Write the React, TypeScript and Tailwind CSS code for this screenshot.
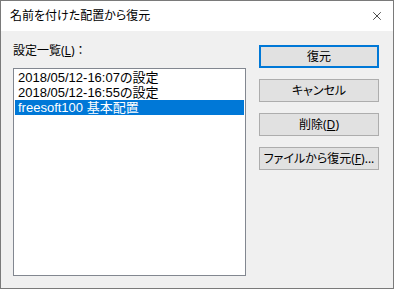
import { X } from "lucide-react";

const font = {
  fontFamily: '"Noto Sans", "Noto Sans CJK JP", sans-serif',
};

type BtnProps = { label: React.ReactNode; primary?: boolean };

const Btn = ({ label, primary }: BtnProps) => (
  <button
    className={`h-[23px] w-[120px] bg-[#e1e1e1] text-[12px] leading-none text-black whitespace-nowrap flex items-center justify-center ${
      primary ? "border-2 border-[#0078d7]" : "border border-[#adadad]"
    }`}
  >
    {label}
  </button>
);

export default function App() {
  const items = ["2018/05/12-16:07の設定", "2018/05/12-16:55の設定", "freesoft100 基本配置"];

  return (
    <div
      className="w-[394px] h-[289px] border border-[#7a7a7a] bg-[#f0f0f0] flex flex-col overflow-hidden [font-feature-settings:'palt']"
      style={font}
    >
      {/* Title bar */}
      <div className="h-[30px] bg-white flex items-center justify-between pl-[9px] pr-[9px] shrink-0">
        <span className="text-[12px] text-black">名前を付けた配置から復元</span>
        <X size={14} strokeWidth={1.2} className="text-black" />
      </div>

      {/* Body */}
      <div className="flex flex-1 pl-[12px] pt-[12px]">
        <div className="flex flex-col">
          <div className="text-[12px] text-black leading-[15px] h-[25px]">
            設定一覧(<span className="underline">L</span>)
            <span className="[font-feature-settings:normal]">：</span>
          </div>
          <div className="w-[233px] h-[208px] border border-[#828790] bg-white p-px font-['Liberation_Sans','Noto_Sans_CJK_JP',sans-serif]">
            {items.map((t, i) => (
              <div
                key={i}
                className={`h-[15px] text-[13px] leading-[15px] pl-[3px] whitespace-nowrap overflow-hidden ${
                  i === 2 ? "bg-[#0078d7] text-white" : "text-black"
                }`}
              >
                {t}
              </div>
            ))}
          </div>
        </div>

        <div className="flex flex-col gap-[11px] ml-[13px] pt-[2px]">
          <Btn label="復元" primary />
          <Btn label="キャンセル" />
          <Btn
            label={
              <>
                削除(<span className="underline">D</span>)
              </>
            }
          />
          <Btn
            label={
              <>
                ファイルから復元(<span className="underline">F</span>)...
              </>
            }
          />
        </div>
      </div>
    </div>
  );
}
